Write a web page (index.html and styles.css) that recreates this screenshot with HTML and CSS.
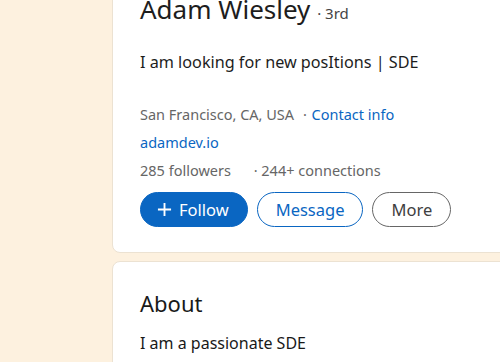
FILE: index.html
```html
<!DOCTYPE html>
<html lang="en">
<head>
    <meta charset="UTF-8">
    <meta name="viewport" content="width=device-width, initial-scale=1.0">
    <title>Adam Wiesley | Profile</title>
    <link rel="stylesheet" href="styles.css">
</head>
<body>
    <main class="profile-column">
        <!-- Top card -->
        <section class="card top-card">
            <h1 class="name">Adam Wiesley <span class="degree">· 3rd</span></h1>
            <p class="headline">I am looking for new posItions | SDE</p>
            <p class="meta">San Francisco, CA, USA <span class="dot">·</span> <a href="#" class="link">Contact info</a></p>
            <p class="meta"><a href="#" class="link">adamdev.io</a></p>
            <p class="meta">
                <span class="followers">285 followers</span>
                <span>· 244+ connections</span>
            </p>
            <div class="actions">
                <button class="pill pill-primary">
                    <svg class="plus" width="15" height="15" viewBox="0 0 16 16">
                        <path d="M8 1v14M1 8h14" stroke="currentColor" stroke-width="2" fill="none"/>
                    </svg>
                    Follow
                </button>
                <button class="pill pill-outline">Message</button>
                <button class="pill pill-muted">More</button>
            </div>
        </section>

        <!-- About -->
        <section class="card about-card">
            <h2 class="section-title">About</h2>
            <p class="about-text">I am a passionate SDE</p>
        </section>
    </main>
</body>
</html>
```

FILE: styles.css
```css
* { margin: 0; padding: 0; box-sizing: border-box; }

body {
    font-family: 'Noto Sans', 'Open Sans', sans-serif;
    background-color: #fdf1df;
    color: #191919;
    overflow: hidden;
}

.profile-column {
    padding-left: 112px;
    margin-right: -20px;
}

.card {
    background-color: #fff;
    border: 1px solid #ece2d2;
    border-radius: 8px;
}

.top-card {
    margin-top: -34px;
    padding: 26px 24px 25px 27px;
}

.name {
    font-size: 26px;
    line-height: 32px;
    font-weight: 400;
    color: #1d1d1d;
}

.degree {
    font-size: 15px;
    color: #444;
}

.headline {
    margin-top: 21px;
    font-size: 16.2px;
    line-height: 24px;
    color: #1d1d1d;
}

.meta {
    margin-top: 8px;
    font-size: 14.5px;
    line-height: 20px;
    color: #666;
}

.headline + .meta {
    margin-top: 30px;
}

.dot {
    margin-left: 5px;
    margin-right: 1px;
}

.link {
    color: #0a66c2;
    text-decoration: none;
}

.followers {
    margin-right: 19px;
}

.actions {
    display: flex;
    gap: 9px;
    margin-top: 12px;
}

.pill {
    display: flex;
    align-items: center;
    gap: 7px;
    font-family: inherit;
    font-size: 16.5px;
    height: 35px;
    padding: 0 18px;
    border-radius: 18px;
    background: #fff;
    cursor: pointer;
}

.pill-primary {
    padding-left: 16px;
    background-color: #0a66c2;
    border: 1px solid #0a66c2;
    color: #fff;
}

.pill-outline {
    border: 1px solid #0a66c2;
    color: #0a66c2;
}

.pill-muted {
    border: 1px solid #666;
    color: #404040;
}

.about-card {
    margin-top: 8px;
    padding: 27px 24px 40px 27px;
}

.section-title {
    font-size: 22px;
    line-height: 28px;
    font-weight: 400;
}

.about-text {
    margin-top: 14px;
    font-size: 16px;
    line-height: 24px;
}
```
